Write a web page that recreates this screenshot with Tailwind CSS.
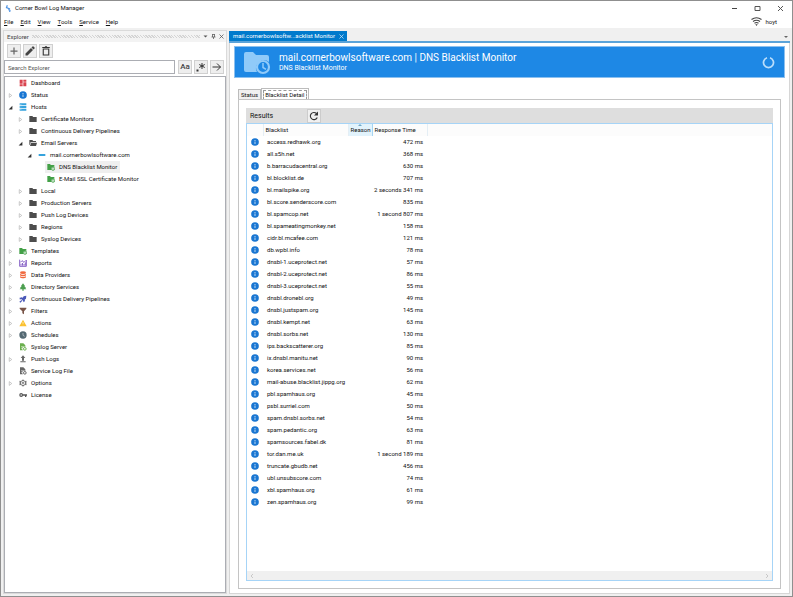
<!DOCTYPE html>
<html lang="en">
<head>
<meta charset="utf-8">
<title>Corner Bowl Log Manager</title>
<script src="https://cdn.jsdelivr.net/npm/@tailwindcss/browser@4"></script>
</head>
<body class="h-screen overflow-hidden bg-white font-[Roboto,'Open_Sans',sans-serif] text-[6px] leading-[12px] text-[#111]">
<svg class="hidden" xmlns="http://www.w3.org/2000/svg">
  <symbol id="dashboard" viewBox="0 0 24 24"><g fill="#d9434e"><path d="M2 2h9v12H2zM2 16h9v6H2zM13 2h9v6h-9zM13 10h9v12h-9z"/></g></symbol>
  <symbol id="info" viewBox="0 0 24 24"><circle cx="12" cy="12" r="11.500" fill="#1976d2"/><path d="M10.600 6h2.800v2.800h-2.800zM10.600 10.500h2.800V18h-2.800z" fill="#c5def5"/></symbol>
  <symbol id="hosts" viewBox="0 0 24 24"><path d="M2 1h20v6H2zM2 9h20v6H2zM2 17h20v6H2z" fill="#36a3dd"/><path d="M4 3h3v2H4zM4 11h3v2H4zM4 19h3v2H4z" fill="#b5dff5"/></symbol>
  <symbol id="folder" viewBox="0 0 24 24"><path d="M1 3h9l2.500 3H23v15H1z" fill="#4d4d4d"/></symbol>
  <symbol id="folder-open" viewBox="0 0 24 24"><path d="M1 3h9l2.500 3H21v3H5L2.500 18 1 17z" fill="#4d4d4d"/><path d="M6 11h18l-3 10H3z" fill="#4d4d4d"/></symbol>
  <symbol id="server" viewBox="0 0 24 24"><path d="M2 9h20v6H2z" fill="#36a3dd"/></symbol>
  <symbol id="folder-clock" viewBox="0 0 24 24"><path d="M1 3h8l2.500 3H22v6a7 7 0 0 0-9 9H1z" fill="#43a047"/><circle cx="18" cy="17" r="5" fill="#dff0e0" stroke="#43a047" stroke-width="2.500"/><path d="M18 14v3l2 2" fill="none" stroke="#43a047" stroke-width="1.500"/></symbol>
  <symbol id="reports" viewBox="0 0 24 24"><path d="M2 2v20h20V3M6 20v-6M10.500 20v-8M15 20v-5M19 20V10M4 10l5-5 6 5 6-6" fill="none" stroke="#7e57c2" stroke-width="2.800"/></symbol>
  <symbol id="database" viewBox="0 0 24 24"><g fill="#f0693e"><ellipse cx="12" cy="5" rx="9" ry="4"/><path d="M3 8c3 4 15 4 18 0v5c-3 4-15 4-18 0zM3 15c3 4 15 4 18 0v4c-3 4-15 4-18 0z"/></g></symbol>
  <symbol id="tree" viewBox="0 0 24 24"><path d="M12 1l6 8h-2l5 6h-2l3 4h-8v4h-4v-4H2l3-4H3l5-6H6z" fill="#4c9f50"/></symbol>
  <symbol id="pipeline" viewBox="0 0 24 24"><path d="M22 2l-1 9-4 3 1 4-4 4-2-5-4-4-5-2 4-4 4 1 3-4zM8 15l2 2-6 6-3-3z" fill="#4a58b8"/><path d="M2 8h5v5H2z" fill="#4a58b8"/></symbol>
  <symbol id="filter" viewBox="0 0 24 24"><path d="M2 2h20v3l-7 8v9l-5-3v-6L2 5z" fill="#795548"/></symbol>
  <symbol id="warning" viewBox="0 0 24 24"><path d="M12 2l11 20H1z" fill="#fbc02d"/><path d="M11 9h2v6h-2zM11 17h2v2h-2z" fill="#fff3c9"/></symbol>
  <symbol id="schedule" viewBox="0 0 24 24"><circle cx="12" cy="12" r="11" fill="#536872"/><path d="M12 6v7l5 3" fill="none" stroke="#d2dade" stroke-width="2"/></symbol>
  <symbol id="doc-green" viewBox="0 0 24 24"><path d="M3 1h10l6 6v5a6 6 0 0 0-7 10H3z" fill="#6aaf4d"/><path d="M6 11h7M6 16h4" stroke="#fff" stroke-width="1.500"/><circle cx="17.500" cy="17.500" r="4" fill="none" stroke="#6aaf4d" stroke-width="3"/></symbol>
  <symbol id="doc-gray" viewBox="0 0 24 24"><path d="M3 1h10l6 6v5a6 6 0 0 0-7 10H3z" fill="#666"/><path d="M6 11h7M6 16h4" stroke="#fff" stroke-width="1.500"/><circle cx="17.500" cy="17.500" r="4" fill="none" stroke="#666" stroke-width="3"/></symbol>
  <symbol id="upload" viewBox="0 0 24 24"><path d="M12 1l7 8h-4v8H9V9H5zM4 19h16v3H4z" fill="#666"/></symbol>
  <symbol id="gear" viewBox="0 0 24 24"><path d="M9 2h6l1 3 3 1 3-1 1 5-2 2 2 2-1 5-3-1-3 1-1 3H9l-1-3-3-1-3 1-1-5 2-2-2-2 1-5 3 1 3-1z" fill="#777"/><circle cx="12" cy="12" r="6" fill="#fff"/><circle cx="12" cy="12" r="3.500" fill="#777"/><circle cx="12" cy="12" r="1.500" fill="#fff"/></symbol>
  <symbol id="key" viewBox="0 0 24 24"><circle cx="6.500" cy="12" r="4" fill="none" stroke="#555" stroke-width="3.500"/><path d="M11 10h13v4h-2v4h-4v-4h-7z" fill="#555"/></symbol>
</svg>

<div class="flex h-full flex-col border border-[#8f8f8f] bg-[#f0f0f0]">
  <header class="flex-none bg-white">
    <div class="flex h-[14px] items-center pl-[4px] pr-[8px]">
      <svg class="mr-[3px] size-[7px]" viewBox="0 0 24 24"><path d="M8 1l-3 8 10 4-2 3 4 2-1 6" fill="none" stroke="#4a90e2" stroke-width="4"/></svg>
      <h1 class="flex-1">Corner Bowl Log Manager</h1>
      <div class="flex items-center gap-[16px]">
        <button aria-label="Minimize"><svg class="size-[7px]" viewBox="0 0 7 7"><path d="M1 3.500h5" stroke="#444"/></svg></button>
        <button aria-label="Maximize"><svg class="size-[7px]" viewBox="0 0 7 7"><path d="M1 1.500h5v4H1z" fill="none" stroke="#555"/></svg></button>
        <button aria-label="Close"><svg class="size-[7px]" viewBox="0 0 7 7"><path d="M1 1l5 5M6 1L1 6" stroke="#555"/></svg></button>
      </div>
    </div>
    <div class="flex h-[13px] items-center pl-[3px] pr-[15px]">
      <nav class="flex flex-1 gap-[7px]">
        <button><u>F</u>ile</button><button><u>E</u>dit</button><button><u>V</u>iew</button><button><u>T</u>ools</button><button><u>S</u>ervice</button><button><u>H</u>elp</button>
      </nav>
      <svg class="mr-[4px] h-[9px] w-[11px]" viewBox="0 0 22 18" fill="none" stroke="#444"><path d="M1 5q10-7 20 0M4 9q7-5 14 0M7 12.500q4-3 8 0" stroke-width="2.200"/><path d="M8.500 14.500h5L11 18z" fill="#444" stroke="none"/></svg>
      <span>hoyt</span>
    </div>
  </header>

  <div class="flex min-h-0 flex-1 gap-[2px] pb-[2px] pl-[2px] pr-[2px] pt-[2px]">
    <aside class="flex w-[224px] flex-none flex-col border border-[#dadada] bg-white">
      <div class="flex h-[11px] flex-none items-center gap-[3px] bg-[#f3f3f3] pl-[3px] pr-[2px] text-[#444]">
        <h2>Explorer</h2>
        <div class="h-[3px] flex-1 bg-[repeating-linear-gradient(45deg,#d4d4d4_0_1px,#f3f3f3_1px_2px)]"></div>
        <button aria-label="Panel menu"><svg class="size-[5px]" viewBox="0 0 10 10"><path d="M1 3h8L5 7z" fill="#555"/></svg></button>
        <button aria-label="Pin"><svg class="size-[5px]" viewBox="0 0 10 10"><path d="M3 0v6M7 0v6M3 1h4M1 6h8M5 6v4" fill="none" stroke="#555" stroke-width="1.500"/></svg></button>
        <button aria-label="Close panel"><svg class="size-[5px]" viewBox="0 0 10 10"><path d="M1 1l8 8M9 1L1 9" stroke="#555" stroke-width="1.500"/></svg></button>
      </div>
      <div class="flex flex-none gap-[2px] px-[3px] pt-[2px]">
        <button aria-label="Add" class="flex size-[14px] items-center justify-center border border-[#d0d0d0] bg-[#eee]"><svg class="size-[8px]" viewBox="0 0 16 16"><path d="M8 1v14M1 8h14" stroke="#666" stroke-width="2.500"/></svg></button>
        <button aria-label="Edit" class="flex size-[14px] items-center justify-center border border-[#d0d0d0] bg-[#eee]"><svg class="size-[10px]" viewBox="0 0 20 20"><path d="M1 19v-4L12 4l4 4L5 19zM13 3l2-2q1-1 2 0l2 2q1 1 0 2l-2 2z" fill="#444"/></svg></button>
        <button aria-label="Delete" class="flex size-[14px] items-center justify-center border border-[#d0d0d0] bg-[#eee]"><svg class="size-[10px]" viewBox="0 0 20 20"><path d="M4.500 6h11v12h-11z" fill="none" stroke="#333" stroke-width="2.200"/><path d="M2.500 2h5l1-1.500h3l1 1.500h5v2.200h-15z" fill="#333"/></svg></button>
      </div>
      <div class="flex flex-none gap-[2px] pr-[2px] pt-[2px]">
        <input aria-label="Search Explorer" placeholder="Search Explorer" class="mr-px h-[14px] min-w-0 flex-1 border border-[#abadb3] bg-white px-[3px] placeholder:text-[#555]">
        <button class="flex size-[14px] items-center justify-center border border-[#d0d0d0] bg-[#eee] text-[8px] font-medium text-[#444]">Aa</button>
        <button aria-label="Regular expression" class="flex size-[14px] items-center justify-center border border-[#d0d0d0] bg-[#eee]"><svg class="size-[10px]" viewBox="0 0 20 20"><path d="M12 2v12M6.500 5l11 6M17.500 5l-11 6" stroke="#333" stroke-width="2"/><path d="M1 15h4v4H1z" fill="#333"/></svg></button>
        <button aria-label="Search" class="flex size-[14px] items-center justify-center border border-[#d0d0d0] bg-[#eee]"><svg class="size-[10px]" viewBox="0 0 20 20"><path d="M1 10h16M10 3l7 7-7 7" fill="none" stroke="#333" stroke-width="2"/></svg></button>
      </div>
      <ul id="tree-list" class="mt-[2px] min-h-0 flex-1 border border-[#abadb3] bg-white"></ul>
    </aside>

    <main class="flex min-w-0 flex-1 flex-col">
      <div class="flex flex-none items-end justify-between border-b-2 border-[#5ba3d9] pt-px">
        <div class="flex h-[10px] items-center gap-[4px] bg-[#007acc] pl-[4px] pr-[3px] text-white">
          <span>mail.cornerbowlsoftw...acklist Monitor</span>
          <button aria-label="Close tab"><svg class="size-[5px]" viewBox="0 0 10 10"><path d="M1 1l8 8M9 1L1 9" stroke="#cfe6f7" stroke-width="1.500"/></svg></button>
        </div>
        <button aria-label="Tab list" class="mb-[2px] mr-[2px]"><svg class="size-[4px]" viewBox="0 0 8 8"><path d="M0 2h8L4 6z" fill="#666"/></svg></button>
      </div>
      <div class="flex min-h-0 flex-1 flex-col border-x border-b border-[#d6d6d6] bg-white px-[4px] pb-[4px] pt-[3px]">
        <section class="flex h-[32px] flex-none items-center border border-[#8cc0ef] bg-[#1e88e5] pl-[8px] pr-[9px] text-white">
          <svg class="mr-[8px] mt-[2px] h-[24px] w-[28px] flex-none" viewBox="0 0 28 24"><path d="M3 1h7l3 3h11q2 0 2 2v5a8 8 0 0 0-12 10H3q-2 0-2-2V3q0-2 2-2z" fill="#90caf9"/><circle cx="20" cy="16" r="6" fill="#1e88e5" stroke="#90caf9" stroke-width="2.200"/><path d="M20 12v4.500l3 1.800" fill="none" stroke="#90caf9" stroke-width="1.500"/></svg>
          <div class="flex-1">
            <h2 class="text-[10px] leading-[12px]">mail.cornerbowlsoftware.com | DNS Blacklist Monitor</h2>
            <p class="text-[7px] leading-[9px]">DNS Blacklist Monitor</p>
          </div>
          <svg class="size-[13px]" viewBox="0 0 26 26"><path d="M10 3.500A10 10 0 1 0 16 3.500" fill="none" stroke="#bbdefb" stroke-width="3.500"/></svg>
        </section>

        <div class="mx-[4px] mt-[10px] flex flex-none items-end">
          <button class="h-[10px] border border-b-0 border-[#bcbcbc] bg-[#f0f0f0] px-[2px] leading-[9px]">Status</button>
          <button class="-mb-px h-[12px] border border-b-0 border-[#bcbcbc] bg-white px-px pt-px leading-[9px]"><span class="block border border-dashed border-[#999] px-px leading-[8px]">Blacklist Detail</span></button>
        </div>
        <div class="ml-[4px] mr-[4px] flex min-h-0 flex-1 flex-col border border-[#c4c4c4] px-[7px] pb-[7px] pt-[8px]">
          <div class="flex h-[15px] flex-none items-center bg-[#dedede] pl-[4px] text-[7px]">
            <h3 class="w-[57px]">Results</h3>
            <button aria-label="Refresh" class="flex size-[14px] items-center justify-center border border-[#ccc] bg-[#f0f0f0]"><svg class="size-[10px]" viewBox="0 0 20 20"><path d="M16.500 13A7.200 7.200 0 1 1 15 5" fill="none" stroke="#333" stroke-width="2.200"/><path d="M18 1v8h-8z" fill="#333"/></svg></button>
          </div>
          <div class="flex min-h-0 flex-1 flex-col border border-[#a6d4f7]">
            <div class="min-h-0 flex-1 overflow-hidden">
              <table class="w-full table-fixed border-collapse">
                <colgroup><col class="w-[16px]"><col class="w-[85px]"><col class="w-[24px]"><col class="w-[55px]"><col></colgroup>
                <thead>
                  <tr class="h-[12px] bg-[#fcfcfc] text-left">
                    <th aria-label="State" class="border-r border-[#e4eef5]"></th>
                    <th class="border-r border-[#e4eef5] pl-[2px] font-normal">Blacklist</th>
                    <th class="relative border-x border-[#a6d4f0] bg-[#e2f3fc] pl-[2px] font-normal">Reason<svg class="absolute left-[9px] top-0 h-[2px] w-[4px]" viewBox="0 0 4 2"><path d="M0 2l2-2 2 2z" fill="#6fa8c8"/></svg></th>
                    <th class="whitespace-nowrap border-r border-[#e4eef5] pl-[2px] font-normal">Response Time</th>
                    <th></th>
                  </tr>
                </thead>
                <tbody id="results"></tbody>
              </table>
            </div>
            <div class="flex h-[9px] flex-none items-center justify-between bg-[#f0f0f0] px-[3px] text-[#bbb]">
              <svg class="size-[4px]" viewBox="0 0 8 8"><path d="M6 0L2 4l4 4" fill="none" stroke="#bbb" stroke-width="1.500"/></svg>
              <svg class="size-[4px]" viewBox="0 0 8 8"><path d="M2 0l4 4-4 4" fill="none" stroke="#bbb" stroke-width="1.500"/></svg>
            </div>
          </div>
        </div>
      </div>
    </main>
  </div>
</div>

<script>
// [depth, state (o = open, c = collapsed, n = leaf, s = selected leaf), icon, label]
const nodes = [
  [0,'n','dashboard','Dashboard'],[0,'c','info','Status'],[0,'o','hosts','Hosts'],
  [1,'c','folder','Certificate Monitors'],[1,'c','folder','Continuous Delivery Pipelines'],[1,'o','folder-open','Email Servers'],
  [2,'o','server','mail.cornerbowlsoftware.com'],[3,'s','folder-clock','DNS Blacklist Monitor'],[3,'n','folder-clock','E-Mail SSL Certificate Monitor'],
  [1,'c','folder','Local'],[1,'c','folder','Production Servers'],[1,'c','folder','Push Log Devices'],[1,'c','folder','Regions'],[1,'c','folder','Syslog Devices'],
  [0,'c','folder-clock','Templates'],[0,'c','reports','Reports'],[0,'c','database','Data Providers'],[0,'c','tree','Directory Services'],
  [0,'c','pipeline','Continuous Delivery Pipelines'],[0,'c','filter','Filters'],[0,'c','warning','Actions'],[0,'c','schedule','Schedules'],
  [0,'n','doc-green','Syslog Server'],[0,'c','upload','Push Logs'],[0,'n','doc-gray','Service Log File'],[0,'c','gear','Options'],[0,'n','key','License']
];
const indent = ['pl-[3px]','pl-[13px]','pl-[22px]','pl-[31px]'];
const arrow = {
  c: '<path d="M2 1l4 3-4 3z" fill="#fff" stroke="#aaa"/>',
  o: '<path d="M7 1v6H1z" fill="#333"/>', n: '', s: ''
};
document.getElementById('tree-list').innerHTML = nodes.map(([d, s, icon, label]) =>
  `<li class="flex h-[12px] items-center ${indent[d]}"><svg class="mr-[4px] size-[5px] flex-none" viewBox="0 0 8 8">${arrow[s]}</svg>
   <span class="flex h-[12px] items-center gap-[4px] pl-[2px] pr-[3px] ${s === 's' ? 'bg-[#efefef]' : ''}"><svg class="size-[8px] flex-none"><use href="#${icon}"/></svg>${label}</span></li>`).join('');

const results = [
  ['access.redhawk.org','472 ms'],['all.s5h.net','368 ms'],['b.barracudacentral.org','630 ms'],['bl.blocklist.de','707 ms'],
  ['bl.mailspike.org','2 seconds 341 ms'],['bl.score.senderscore.com','835 ms'],['bl.spamcop.net','1 second 807 ms'],['bl.spameatingmonkey.net','158 ms'],
  ['cidr.bl.mcafee.com','121 ms'],['db.wpbl.info','78 ms'],['dnsbl-1.uceprotect.net','57 ms'],['dnsbl-2.uceprotect.net','86 ms'],
  ['dnsbl-3.uceprotect.net','55 ms'],['dnsbl.dronebl.org','49 ms'],['dnsbl.justspam.org','145 ms'],['dnsbl.kempt.net','63 ms'],
  ['dnsbl.sorbs.net','130 ms'],['ips.backscatterer.org','85 ms'],['ix.dnsbl.manitu.net','90 ms'],['korea.services.net','56 ms'],
  ['mail-abuse.blacklist.jippg.org','62 ms'],['pbl.spamhaus.org','45 ms'],['psbl.surriel.com','50 ms'],['spam.dnsbl.sorbs.net','54 ms'],
  ['spam.pedantic.org','63 ms'],['spamsources.fabel.dk','81 ms'],['tor.dan.me.uk','1 second 189 ms'],['truncate.gbudb.net','456 ms'],
  ['ubl.unsubscore.com','74 ms'],['xbl.spamhaus.org','61 ms'],['zen.spamhaus.org','99 ms']
];
document.getElementById('results').innerHTML = results.map(([host, time]) =>
  `<tr class="h-[12px]"><td><svg class="mx-auto size-[8px]"><use href="#info"/></svg></td><td class="pl-[4px]">${host}</td><td></td><td class="whitespace-nowrap pr-[4px] text-right">${time}</td><td></td></tr>`).join('');
</script>
</body>
</html>
